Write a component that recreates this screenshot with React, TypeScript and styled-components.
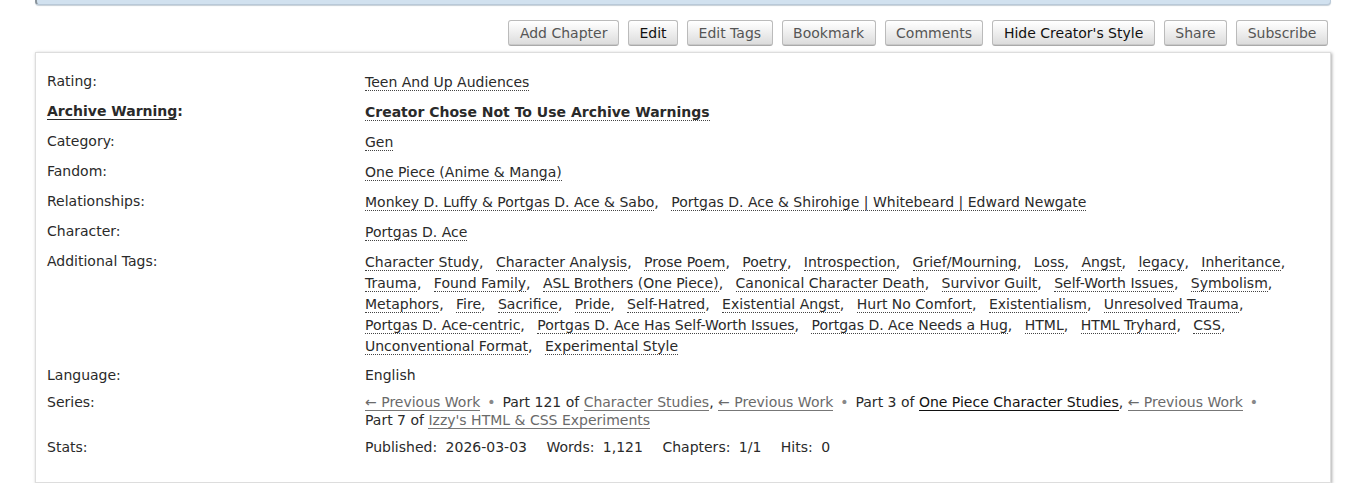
import styled, { createGlobalStyle } from 'styled-components';

const GlobalStyle = createGlobalStyle`
  html, body {
    margin: 0;
    padding: 0;
    background: #fff;
  }
  body {
    font-family: 'DejaVu Sans', Verdana, sans-serif;
    font-size: 14px;
    line-height: 18px;
    color: #2a2a2a;
  }
`;

const Page = styled.div`
  padding: 0 35px;
`;

const NoticeBar = styled.div`
  height: 4px;
  background: #d1e1ef;
  border: 1px solid #b9c9d8;
  border-top: none;
  border-left: 2px solid #8a949c;
  border-radius: 0 0 4px 4px;
  box-shadow: 0 1px 1px #c6cfd6;
`;

const Actions = styled.ul`
  list-style: none;
  margin: 15px 3px 6px 0;
  padding: 0;
  display: flex;
  justify-content: flex-end;
  gap: 9px;
`;

const ActionButton = styled.li<{ $strong?: boolean }>`
  box-sizing: border-box;
  height: 26px;
  padding: 0 10.5px;
  display: flex;
  align-items: center;
  border: 1px solid #bbb;
  border-bottom-color: #aaa;
  border-radius: 3px;
  background: linear-gradient(#fff 2%, #ddd 95%, #bbb 100%);
  color: ${(p) => (p.$strong ? '#111' : '#555')};
  white-space: nowrap;
`;

const MetaBox = styled.dl`
  margin: 0;
  padding: 19px 11px 26px;
  border: 1px solid #ddd;
  box-shadow: 1px 1px 3px #aaa;
  display: grid;
  grid-template-columns: 25% 72.5%;
  row-gap: 9px;
`;

const Label = styled.dt`
  margin: 0;
  line-height: 18px;
`;

const LabelLink = styled.a`
  color: #2a2a2a;
  font-weight: bold;
  text-decoration: none;
  border-bottom: 1px solid #2a2a2a;
`;

const Value = styled.dd<{ $tags?: boolean }>`
  margin: 0;
  line-height: ${(p) => (p.$tags ? '21px' : '18px')};
`;

/* the gap between tags is a widened space, so it drops off at a line end */
const TagList = styled.ul`
  list-style: none;
  margin: 0;
  padding: 0;
  display: inline;
  word-spacing: 8px;
`;

const TagItem = styled.li`
  display: inline;
  &:not(:last-child)::after {
    content: ',';
  }
`;

const Tag = styled.a<{ $bold?: boolean }>`
  color: #2a2a2a;
  text-decoration: none;
  word-spacing: normal;
  font-weight: ${(p) => (p.$bold ? 'bold' : 'normal')};
  border-bottom: 1px dotted #444;
`;

const SeriesLink = styled.a<{ $dark?: boolean }>`
  color: ${(p) => (p.$dark ? '#111' : '#6a6a6a')};
  text-decoration: none;
  border-bottom: 1px solid ${(p) => (p.$dark ? '#111' : '#777')};
`;

const Dot = styled.span`
  color: #888;
  margin: 0 2.5px;
`;

const StatLabel = styled.span`
  margin-right: 4px;
`;

const StatValue = styled.span`
  margin-right: 15px;
`;

const actions = [
  { label: 'Add Chapter' },
  { label: 'Edit', strong: true },
  { label: 'Edit Tags' },
  { label: 'Bookmark' },
  { label: 'Comments' },
  { label: "Hide Creator's Style", strong: true },
  { label: 'Share' },
  { label: 'Subscribe' },
];

const additionalTags = [
  'Character Study', 'Character Analysis', 'Prose Poem', 'Poetry', 'Introspection',
  'Grief/Mourning', 'Loss', 'Angst', 'legacy', 'Inheritance', 'Trauma', 'Found Family',
  'ASL Brothers (One Piece)', 'Canonical Character Death', 'Survivor Guilt',
  'Self-Worth Issues', 'Symbolism', 'Metaphors', 'Fire', 'Sacrifice', 'Pride',
  'Self-Hatred', 'Existential Angst', 'Hurt No Comfort', 'Existentialism',
  'Unresolved Trauma', 'Portgas D. Ace-centric', 'Portgas D. Ace Has Self-Worth Issues',
  'Portgas D. Ace Needs a Hug', 'HTML', 'HTML Tryhard', 'CSS', 'Unconventional Format',
  'Experimental Style',
];

const Tags = ({ items, bold }: { items: string[]; bold?: boolean }) => (
  <TagList>
    {items.map((t) => (
      <>
        <TagItem key={t}>
          <Tag href="#" $bold={bold}>{t}</Tag>
        </TagItem>{' '}
      </>
    ))}
  </TagList>
);

const App = () => {
  return (
    <Page>
      <GlobalStyle />
      <NoticeBar />
      <Actions>
        {actions.map((a) => (
          <ActionButton key={a.label} $strong={a.strong}>
            {a.label}
          </ActionButton>
        ))}
      </Actions>
      <MetaBox>
        <Label>Rating:</Label>
        <Value $tags><Tags items={['Teen And Up Audiences']} /></Value>

        <Label><LabelLink href="#">Archive Warning</LabelLink><b>:</b></Label>
        <Value $tags><Tags items={['Creator Chose Not To Use Archive Warnings']} bold /></Value>

        <Label>Category:</Label>
        <Value $tags><Tags items={['Gen']} /></Value>

        <Label>Fandom:</Label>
        <Value $tags><Tags items={['One Piece (Anime & Manga)']} /></Value>

        <Label>Relationships:</Label>
        <Value $tags>
          <Tags
            items={[
              'Monkey D. Luffy & Portgas D. Ace & Sabo',
              'Portgas D. Ace & Shirohige | Whitebeard | Edward Newgate',
            ]}
          />
        </Value>

        <Label>Character:</Label>
        <Value $tags><Tags items={['Portgas D. Ace']} /></Value>

        <Label>Additional Tags:</Label>
        <Value $tags><Tags items={additionalTags} /></Value>

        <Label>Language:</Label>
        <Value>English</Value>

        <Label>Series:</Label>
        <Value>
          <SeriesLink href="#">← Previous Work</SeriesLink> <Dot>•</Dot> Part 121 of{' '}
          <SeriesLink href="#">Character Studies</SeriesLink>,{' '}
          <SeriesLink href="#">← Previous Work</SeriesLink> <Dot>•</Dot> Part 3 of{' '}
          <SeriesLink href="#" $dark>One Piece Character Studies</SeriesLink>,{' '}
          <SeriesLink href="#">← Previous Work</SeriesLink> <Dot>•</Dot> Part 7 of{' '}
          <SeriesLink href="#">Izzy's HTML &amp; CSS Experiments</SeriesLink>
        </Value>

        <Label>Stats:</Label>
        <Value>
          <StatLabel>Published:</StatLabel> <StatValue>2026-03-03</StatValue>{' '}
          <StatLabel>Words:</StatLabel> <StatValue>1,121</StatValue>{' '}
          <StatLabel>Chapters:</StatLabel> <StatValue>1/1</StatValue>{' '}
          <StatLabel>Hits:</StatLabel> <StatValue>0</StatValue>
        </Value>
      </MetaBox>
    </Page>
  );
};

export default App;
